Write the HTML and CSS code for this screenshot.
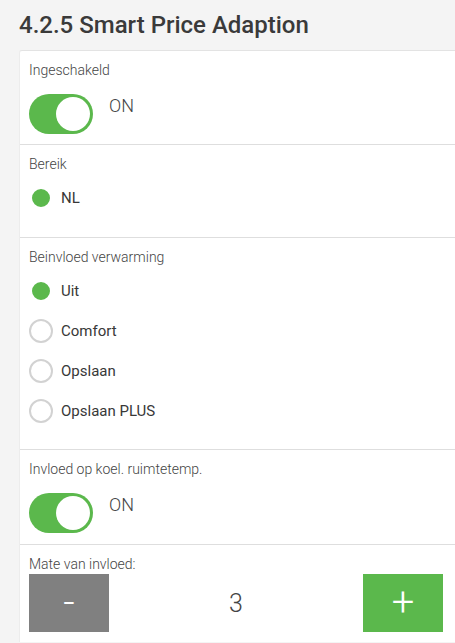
FILE: index.html
```html
<!DOCTYPE html>
<html lang="nl">
<head>
<meta charset="utf-8">
<title>4.2.5 Smart Price Adaption</title>
<link rel="stylesheet" href="styles.css">
</head>
<body>
<h1 class="title">4.2.5 Smart Price Adaption</h1>
<div class="card">
  <div class="section section-toggle">
    <div class="label">Ingeschakeld</div>
    <div class="toggle-row">
      <span class="toggle on"><span class="knob"></span></span>
      <span class="toggle-text">ON</span>
    </div>
  </div>
  <div class="section section-radio section-radio-first">
    <div class="label">Bereik</div>
    <ul class="radio-list">
      <li class="radio-row"><span class="radio checked"></span><span class="radio-text">NL</span></li>
    </ul>
  </div>
  <div class="section section-radio">
    <div class="label">Beinvloed verwarming</div>
    <ul class="radio-list">
      <li class="radio-row"><span class="radio checked"></span><span class="radio-text">Uit</span></li>
      <li class="radio-row"><span class="radio"></span><span class="radio-text">Comfort</span></li>
      <li class="radio-row"><span class="radio"></span><span class="radio-text">Opslaan</span></li>
      <li class="radio-row"><span class="radio"></span><span class="radio-text">Opslaan PLUS</span></li>
    </ul>
  </div>
  <div class="section section-toggle section-toggle-cool">
    <div class="label">Invloed op koel. ruimtetemp.</div>
    <div class="toggle-row">
      <span class="toggle on"><span class="knob"></span></span>
      <span class="toggle-text">ON</span>
    </div>
  </div>
  <div class="section section-stepper">
    <div class="label">Mate van invloed:</div>
    <div class="stepper">
      <button class="step-btn minus" type="button">-</button>
      <span class="step-value">3</span>
      <button class="step-btn plus" type="button">+</button>
    </div>
  </div>
</div>
</body>
</html>
```

FILE: styles.css
```css
html, body {
  margin: 0;
  padding: 0;
}
body {
  background: #f4f4f4;
  font-family: Roboto, "Liberation Sans", Arial, sans-serif;
  color: #333;
  overflow: hidden;
}
.title {
  margin: 11px 0 10px 19px;
  font-size: 24px;
  line-height: 29px;
  font-weight: 500;
  color: #3a3a3a;
}
.card {
  margin-left: 19px;
  background: #fff;
  border-top: 1px solid #e3e3e3;
  border-left: 1px solid #ececec;
  border-top-left-radius: 3px;
}
.section {
  padding: 9px 12px 10px 9px;
  border-bottom: 1px solid #dedede;
}
.section:last-child {
  border-bottom: none;
}
.label {
  font-size: 14px;
  line-height: 20px;
  font-weight: 300;
  color: #444;
}
.section-toggle .toggle-row {
  margin-top: 14px;
  display: flex;
  align-items: flex-start;
  gap: 16px;
}
.section-toggle-cool {
  padding-bottom: 11px;
}
.toggle {
  width: 64px;
  height: 40px;
  border-radius: 20px;
  background: #5bb84c;
  display: flex;
  align-items: center;
  justify-content: flex-end;
  padding: 0 3px;
  box-sizing: border-box;
}
.knob {
  width: 34px;
  height: 34px;
  border-radius: 50%;
  background: #fff;
}
.toggle-text {
  font-size: 18px;
  line-height: 24px;
  font-weight: 300;
  color: #444;
}
.section-radio {
  padding-bottom: 18px;
}
.section-radio-first {
  padding-bottom: 19px;
}
.radio-list {
  list-style: none;
  margin: 4px 0 0 0;
  padding: 0;
}
.radio-row {
  height: 40px;
  display: flex;
  align-items: center;
  gap: 8px;
}
.radio {
  width: 24px;
  height: 24px;
  box-sizing: border-box;
  border-radius: 50%;
  border: 2.5px solid #d2d2d2;
  background: #fff;
}
.radio.checked {
  border: 3px solid #fff;
  background: #5bb84c;
}
.radio-text {
  font-size: 15px;
  line-height: 20px;
  font-weight: 400;
  color: #383838;
}
.section-stepper {
  padding-bottom: 10px;
}
.stepper {
  display: flex;
  align-items: center;
  justify-content: space-between;
}
.step-btn {
  width: 80px;
  height: 58px;
  border: none;
  margin: 0;
  padding: 0;
  color: #fff;
  font-family: Roboto, "Liberation Sans", Arial, sans-serif;
  font-size: 40px;
  font-weight: 300;
  line-height: 58px;
  display: flex;
  align-items: center;
  justify-content: center;
}
.step-btn.minus {
  background: #808080;
}
.step-btn.plus {
  background: #5bb84c;
}
.step-value {
  font-size: 25px;
  font-weight: 300;
  color: #444;
}
```
